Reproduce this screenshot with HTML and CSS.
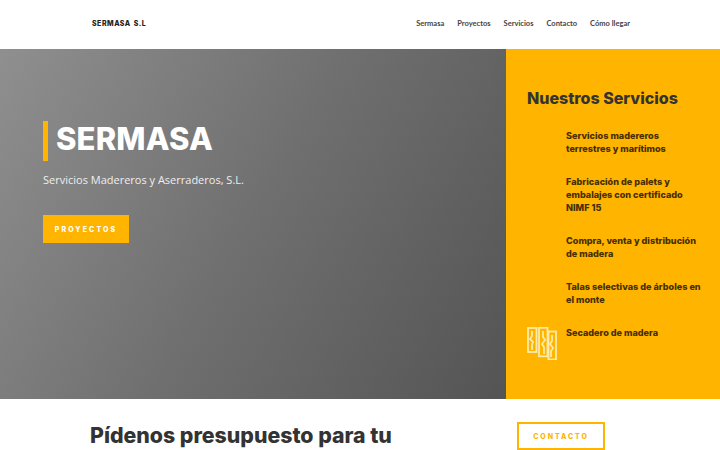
FILE: index.html
```html
<!DOCTYPE html>
<html lang="es">
<head>
  <meta charset="UTF-8">
  <title>Sermasa</title>
  <link rel="stylesheet" href="styles.css">
</head>
<body>
  <header class="site-header">
    <a class="logo" href="#">SERMASA S.L</a>
    <nav class="main-nav">
      <a href="#">Sermasa</a>
      <a href="#">Proyectos</a>
      <a href="#">Servicios</a>
      <a href="#">Contacto</a>
      <a href="#">Cómo llegar</a>
    </nav>
  </header>

  <section class="hero">
    <div class="hero-main">
      <h1 class="hero-title">SERMASA</h1>
      <p class="hero-text">Servicios Madereros y Aserraderos, S.L.</p>
      <a class="btn-solid" href="#">PROYECTOS</a>
    </div>
    <aside class="services">
      <h2 class="services-title">Nuestros Servicios</h2>
      <ul class="services-list">
        <li class="service"><span class="service-icon"></span><p>Servicios madereros terrestres y marítimos</p></li>
        <li class="service"><span class="service-icon"></span><p>Fabricación de palets y embalajes con certificado NIMF 15</p></li>
        <li class="service"><span class="service-icon"></span><p>Compra, venta y distribución de madera</p></li>
        <li class="service"><span class="service-icon"></span><p>Talas selectivas de árboles en el monte</p></li>
        <li class="service">
          <span class="service-icon">
            <svg viewBox="0 0 30 33" fill="none" stroke="#ffeaa8" stroke-width="1.8">
              <rect x="1" y="1" width="8.5" height="24"></rect>
              <rect x="12" y="0.8" width="8.5" height="28.5"></rect>
              <rect x="21.5" y="4.5" width="7.5" height="28"></rect>
              <path d="M5 4v5l-2 3 3 3-1 3v5"></path>
              <path d="M16 4v6l2 3-3 4 2 3v7"></path>
              <path d="M25 8v6l-2 3 3 4-2 3v6"></path>
            </svg>
          </span>
          <p>Secadero de madera</p>
        </li>
      </ul>
    </aside>
  </section>

  <section class="quote">
    <h2 class="quote-title">Pídenos presupuesto para tu</h2>
    <a class="btn-outline" href="#">CONTACTO</a>
  </section>
</body>
</html>
```

FILE: styles.css
```css
* {
  box-sizing: border-box;
}

html, body {
  height: 450px;
  overflow: hidden;
}

body {
  margin: 0;
  background: white;
  font-family: 'Inter', sans-serif;
  color: #333;
}

a {
  text-decoration: none;
}

.site-header {
  height: 49px;
  padding: 0 90px 2px 92px;
  display: flex;
  align-items: center;
  justify-content: space-between;
}

.logo {
  font-weight: 800;
  font-size: 7px;
  letter-spacing: 0.5px;
  word-spacing: 1px;
  color: #222;
}

.main-nav {
  display: flex;
  gap: 13px;
}

.main-nav a {
  font-family: 'Lato', sans-serif;
  font-weight: 700;
  font-size: 7.5px;
  color: #444;
}

.hero {
  height: 350px;
  display: flex;
}

.hero-main {
  width: 506px;
  padding: 72px 0 0 43px;
  background: linear-gradient(120deg, #8f8f8f 0%, #6f6f6f 50%, #545454 100%);
}

.hero-title {
  margin: 0;
  height: 40px;
  padding-left: 8px;
  border-left: 5px solid #ffb400;
  font-size: 31px;
  line-height: 36px;
  font-weight: 800;
  letter-spacing: 0.15px;
  color: white;
}

.hero-text {
  margin: 12px 0 0;
  font-family: 'Open Sans', sans-serif;
  font-size: 11px;
  line-height: 14px;
  color: #eee;
}

.btn-solid {
  margin-top: 28px;
  width: 86px;
  height: 28px;
  display: flex;
  align-items: center;
  justify-content: center;
  background: #ffb400;
  color: white;
  font-size: 7px;
  font-weight: 800;
  letter-spacing: 2.1px;
}

.services {
  width: 214px;
  padding: 40px 0 0 21px;
  background: #ffb400;
}

.services-title {
  margin: 0 0 22px;
  font-size: 16px;
  line-height: 18px;
  font-weight: 800;
  color: #333;
}

.services-list {
  margin: 0;
  padding: 0;
  list-style: none;
}

.service {
  display: flex;
  gap: 9px;
  margin-bottom: 20px;
}

.service-icon {
  flex: none;
  width: 30px;
  padding-top: 1px;
}

.service-icon svg {
  display: block;
  width: 30px;
  height: 33px;
}

.service p {
  margin: 0;
  width: 137px;
  font-size: 9.1px;
  line-height: 13px;
  font-weight: 800;
  color: #472f00;
}

.quote {
  height: 51px;
  padding: 23px 115px 0 90px;
  display: flex;
  justify-content: space-between;
  align-items: flex-start;
}

.quote-title {
  margin: 0;
  font-size: 21.3px;
  line-height: 26px;
  font-weight: 800;
  color: #333;
}

.btn-outline {
  width: 88px;
  height: 28px;
  display: flex;
  align-items: center;
  justify-content: center;
  border: 2px solid #ffb400;
  color: #ffb400;
  font-size: 7px;
  font-weight: 800;
  letter-spacing: 1.9px;
}
```
